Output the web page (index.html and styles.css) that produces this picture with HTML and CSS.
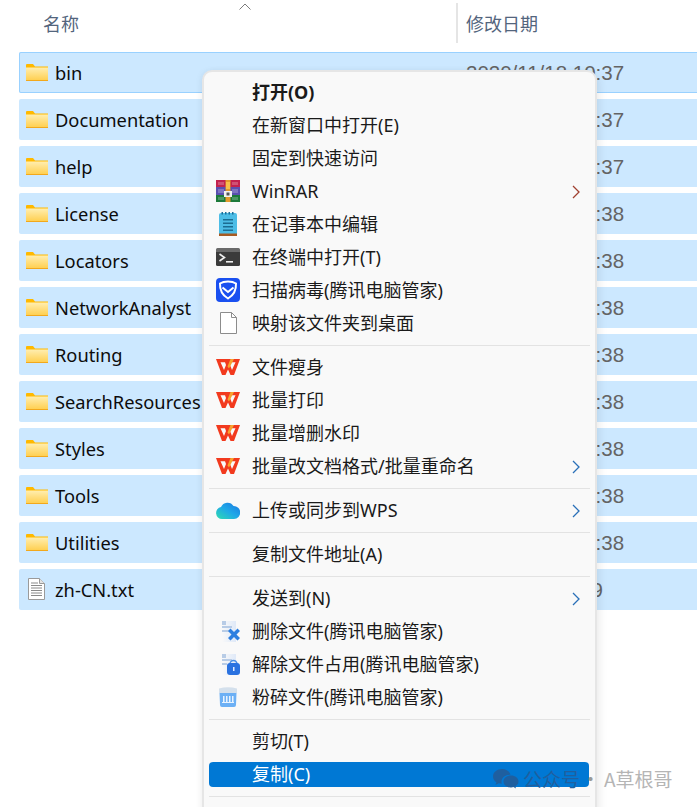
FILE: index.html
```html
<!DOCTYPE html>
<html lang="zh-CN">
<head>
<meta charset="utf-8">
<title>资源管理器</title>
<link rel="stylesheet" href="styles.css">
</head>
<body>
<svg class="defs" width="0" height="0" aria-hidden="true">
  <defs>
    <linearGradient id="fold" x1="0" y1="0" x2="0" y2="1"><stop offset="0" stop-color="#ffeeb0"/><stop offset="1" stop-color="#ffd052"/></linearGradient>
    <linearGradient id="cloud" x1="0" y1="1" x2="1" y2="0"><stop offset="0" stop-color="#2fdcb0"/><stop offset="0.5" stop-color="#1fa8e8"/><stop offset="1" stop-color="#1a76e0"/></linearGradient>
    <linearGradient id="doc" x1="0" y1="0" x2="1" y2="0"><stop offset="0" stop-color="#f9f9f9"/><stop offset="1" stop-color="#dfe9f8"/></linearGradient>
    <symbol id="folder" viewBox="0 0 22 17">
      <path d="M0 1a1 1 0 0 1 1-1h6l2 2.500h13v14.500H0z" fill="#ffb900"/>
      <path d="M0 3.500h22V16H0z" fill="url(#fold)"/>
      <path d="M0 16h22v1H0z" fill="#f2a81c"/>
    </symbol>
    <symbol id="wpsmark" viewBox="0 0 24 16">
      <path d="M0 0h24l-6 16h-3.500L12 10.500 9.500 16H6zM4.500 3.300L8 11l2-5-1-2.700zM15 3.300L14 6l2 5 3.500-7.700z" fill="#f23a1e" fill-rule="evenodd"/>
      <path d="M11.500 7.500L14.500 0H18l-5 9.500z" fill="#f8a22e"/>
    </symbol>
    <symbol id="chev" viewBox="0 0 8 14">
      <path d="M1 1l6 6-6 6" fill="none" stroke="currentColor" stroke-width="1.300"/>
    </symbol>
  </defs>
</svg>
<main class="page">
  <header class="head">
    <div class="col-name">名称<svg class="sort" width="12" height="7" viewBox="0 0 12 7"><path d="M.5 6.500L6 1l5.500 5.500" fill="none" stroke="#7b7b7b"/></svg></div>
    <div class="col-date">修改日期</div>
  </header>
  <ul class="files">
    <li class="row first"><svg class="ficon"><use href="#folder"/></svg><span class="fname">bin</span><span class="fdate">2020/11/18 10:37</span></li>
    <li class="row"><svg class="ficon"><use href="#folder"/></svg><span class="fname">Documentation</span><span class="fdate">2020/11/18 10:37</span></li>
    <li class="row"><svg class="ficon"><use href="#folder"/></svg><span class="fname">help</span><span class="fdate">2020/11/18 10:37</span></li>
    <li class="row"><svg class="ficon"><use href="#folder"/></svg><span class="fname">License</span><span class="fdate">2020/11/18 10:38</span></li>
    <li class="row"><svg class="ficon"><use href="#folder"/></svg><span class="fname">Locators</span><span class="fdate">2020/11/18 10:38</span></li>
    <li class="row"><svg class="ficon"><use href="#folder"/></svg><span class="fname">NetworkAnalyst</span><span class="fdate">2020/11/18 10:38</span></li>
    <li class="row"><svg class="ficon"><use href="#folder"/></svg><span class="fname">Routing</span><span class="fdate">2020/11/18 10:38</span></li>
    <li class="row"><svg class="ficon"><use href="#folder"/></svg><span class="fname">SearchResources</span><span class="fdate">2020/11/18 10:38</span></li>
    <li class="row"><svg class="ficon"><use href="#folder"/></svg><span class="fname">Styles</span><span class="fdate">2020/11/18 10:38</span></li>
    <li class="row"><svg class="ficon"><use href="#folder"/></svg><span class="fname">Tools</span><span class="fdate">2020/11/18 10:38</span></li>
    <li class="row"><svg class="ficon"><use href="#folder"/></svg><span class="fname">Utilities</span><span class="fdate">2020/11/18 10:38</span></li>
    <li class="row"><svg class="ficon txt" viewBox="0 0 17 22" width="17" height="22"><path d="M.5.500h11l5 5v16H.500z" fill="#fff" stroke="#9a9a9a"/><path d="M11.500.500v5h5" fill="#e4e4e4" stroke="#9a9a9a"/><path d="M3 5h7M3 7.500h11M3 10h11M3 12.500h11M3 15h11M3 17.500h11" stroke="#8a8a8a"/></svg><span class="fname">zh-CN.txt</span><span class="fdate">2020/9/8 10:39</span></li>
  </ul>

  <nav class="menu">
    <div class="item strong"><span class="micon"></span><span class="label">打开(O)</span></div>
    <div class="item"><span class="micon"></span><span class="label">在新窗口中打开(E)</span></div>
    <div class="item"><span class="micon"></span><span class="label">固定到快速访问</span></div>
    <div class="item"><span class="micon"><svg width="24" height="22" viewBox="0 0 24 22"><path d="M0 0h24v7H0z" fill="#c2224f"/><path d="M0 7h24v8H0z" fill="#5a4fb0"/><path d="M0 15h24v7H0z" fill="#1d7a3a"/><path d="M2 2h6v3H2zM2 9h6v4H2zM2 17h6v3H2zM16 2h6v3h-6zM16 9h6v4h-6zM16 17h6v3h-6z" fill="#fff" opacity=".22"/><path d="M9.500 0h5v22h-5z" fill="#e39a2c"/><path d="M8 11h8v6H8z" fill="#f2f2f2"/><path d="M10.500 12.500h3v3h-3z" fill="#555"/><path d="M10 2h4v7h-4z" fill="#f6c04a"/></svg></span><span class="label">WinRAR</span><svg class="chev red"><use href="#chev"/></svg></div>
    <div class="item"><span class="micon"><svg width="18" height="24" viewBox="0 0 18 24"><path d="M0 3a2 2 0 0 1 2-2h14a2 2 0 0 1 2 2v19H0z" fill="#4dbde6"/><path d="M0 21.500h18V24H0z" fill="#a65a22"/><path d="M2.500 0h1.500v2.500H2.500zM6 0h1.500v2.500H6zM9.500 0H11v2.500H9.500zM13 0h1.500v2.500H13z" fill="#1b6f9a"/><path d="M4 7h10v1.500H4zM4 10.500h10V12H4zM4 14h10v1.500H4zM4 17.500h10V19H4z" fill="#1c6d92"/></svg></span><span class="label">在记事本中编辑</span></div>
    <div class="item"><span class="micon"><svg width="24" height="18" viewBox="0 0 24 18"><path d="M1.500 0h21A1.500 1.500 0 0 1 24 1.500V4H0V1.500A1.500 1.500 0 0 1 1.500 0z" fill="#6a6a6a"/><path d="M0 4h24v12.500a1.500 1.500 0 0 1-1.500 1.500h-21A1.500 1.500 0 0 1 0 16.500z" fill="#3b3b3b"/><path d="M3.500 6l5 3.500-5 3.500" fill="none" stroke="#f0f0f0" stroke-width="1.600"/><path d="M10 13h7v1.600h-7z" fill="#f0f0f0"/></svg></span><span class="label">在终端中打开(T)</span></div>
    <div class="item"><span class="micon"><svg width="24" height="24" viewBox="0 0 24 24"><rect width="24" height="24" rx="4" fill="#1a50f0"/><path d="M12 3.500c3.500 0 6.500 1 8 2 .3 6.500-2 11.500-8 15-6-3.500-8.300-8.500-8-15 1.500-1 4.500-2 8-2z" fill="none" stroke="#fff" stroke-width="2"/><path d="M6.500 9.500l5.500 4.500 5.500-4.500" fill="none" stroke="#fff" stroke-width="2"/></svg></span><span class="label">扫描病毒(腾讯电脑管家)</span></div>
    <div class="item"><span class="micon"><svg width="17" height="22" viewBox="0 0 17 22"><path d="M.500.500h11l5 5v16H.500z" fill="#fff" stroke="#8c8c8c"/><path d="M11.500.500v5h5" fill="none" stroke="#8c8c8c"/></svg></span><span class="label">映射该文件夹到桌面</span></div>
    <div class="sep"></div>
    <div class="item"><span class="micon"><svg width="24" height="16"><use href="#wpsmark"/></svg></span><span class="label">文件瘦身</span></div>
    <div class="item"><span class="micon"><svg width="24" height="16"><use href="#wpsmark"/></svg></span><span class="label">批量打印</span></div>
    <div class="item"><span class="micon"><svg width="24" height="16"><use href="#wpsmark"/></svg></span><span class="label">批量增删水印</span></div>
    <div class="item"><span class="micon"><svg width="24" height="16"><use href="#wpsmark"/></svg></span><span class="label">批量改文档格式/批量重命名</span><svg class="chev"><use href="#chev"/></svg></div>
    <div class="sep"></div>
    <div class="item"><span class="micon"><svg width="24" height="18" viewBox="0 0 24 18"><path d="M6 18a6 6 0 0 1-1-11.900A7 7 0 0 1 17.500 5 6.500 6.500 0 0 1 18 18z" fill="url(#cloud)"/></svg></span><span class="label">上传或同步到WPS</span><svg class="chev"><use href="#chev"/></svg></div>
    <div class="sep"></div>
    <div class="item"><span class="micon"></span><span class="label">复制文件地址(A)</span></div>
    <div class="sep"></div>
    <div class="item"><span class="micon"></span><span class="label">发送到(N)</span><svg class="chev"><use href="#chev"/></svg></div>
    <div class="item"><span class="micon shift"><svg width="18" height="21" viewBox="0 0 18 21"><path d="M0 0h14v21H0z" fill="url(#doc)"/><path d="M0 0h4v4H0z" fill="#b8cce6"/><path d="M0 5h10v2H0zM0 9h7v2H0z" fill="#b8cce6"/><path d="M6 10l2.500-2.500L12 11l3.500-3.500L18 10l-3.500 3.500L18 17l-2.500 2.500L12 16l-3.500 3.500L6 17l3.500-3.500z" fill="#2d7fe0"/></svg></span><span class="label">删除文件(腾讯电脑管家)</span></div>
    <div class="item"><span class="micon shift"><svg width="18" height="21" viewBox="0 0 18 21"><path d="M0 0h14v21H0z" fill="url(#doc)"/><path d="M0 0h4v4H0z" fill="#b8cce6"/><path d="M0 5h10v2H0zM0 9h5v2H0z" fill="#b8cce6"/><path d="M8 10a3.500 3.500 0 0 1 7 0" fill="none" stroke="#4a8fe6" stroke-width="1.500"/><rect x="5" y="9" width="13" height="12" rx="3" fill="#2a72e0"/><path d="M11 13h1.500v4H11z" fill="#dfeaff"/></svg></span><span class="label">解除文件占用(腾讯电脑管家)</span></div>
    <div class="item"><span class="micon"><svg width="18" height="20" viewBox="0 0 18 20"><path d="M0 1.500Q9-1 18 1.500V6H0z" fill="#d4e0ec"/><path d="M.500 6h17l-.5 12a2 2 0 0 1-2 2H3a2 2 0 0 1-2-2z" fill="#6cb0f5"/><path d="M4 9h1.500v6H4zM7 9h1.500v6H7zM10 9h1.500v6H10zM13 9h1.500v6H13zM3 15h12v1H3z" fill="#e8f3ff"/></svg></span><span class="label">粉碎文件(腾讯电脑管家)</span></div>
    <div class="sep"></div>
    <div class="item"><span class="micon"></span><span class="label">剪切(T)</span></div>
    <div class="item active"><span class="micon"></span><span class="label">复制(C)</span></div>
    <div class="sep"></div>
  </nav>

  <div class="mark">
    <svg width="26" height="22" viewBox="0 0 26 22"><path d="M9 1C4 1 0 4.300 0 8.500c0 2.400 1.300 4.400 3.400 5.800L2.500 17l3.200-1.700c1 .3 2 .4 3.100.4-.2-.7-.3-1.300-.3-2 0-3.900 3.700-7 8.300-7h.7C16.600 3.300 13.100 1 9 1z" fill="#1f5f9f"/><path d="M25.500 13.500c0-3.400-3.300-6-7.500-6s-7.500 2.600-7.500 6 3.300 6 7.500 6c.9 0 1.700-.1 2.500-.4l2.500 1.400-.7-2.200c2-1.100 3.200-2.900 3.200-4.800z" fill="#1f5f9f"/></svg>
    <span class="mark-a">公众号</span><span class="mark-dot">·</span><span class="mark-b">A草根哥</span>
  </div>
</main>
</body>
</html>
```

FILE: styles.css
```css
* { box-sizing: border-box; }
html, body { margin: 0; padding: 0; background: #fff; }
.defs { position: absolute; }
.page {
  position: relative;
  width: 697px;
  height: 807px;
  overflow: hidden;
  font-family: "Noto Sans", "Noto Sans CJK SC", sans-serif;
  font-size: 18px;
  color: #111;
}
.head { display: flex; height: 52px; padding-top: 3px; }
.col-name {
  position: relative;
  width: 456px;
  padding: 7px 0 0 43px;
  color: #53657d;
  line-height: 26px;
  font-family: "Noto Sans CJK SC", sans-serif;
}
.sort { position: absolute; left: 239px; top: 0; }
.col-date {
  height: 40px;
  flex: 1;
  padding: 7px 0 0 8px;
  border-left: 2px solid #e5e5e5;
  color: #53657d;
  line-height: 26px;
  font-family: "Noto Sans CJK SC", sans-serif;
}
.files { list-style: none; margin: 0; padding: 0 0 0 19px; display: flex; flex-direction: column; gap: 6px; }
.row {
  display: flex;
  align-items: center;
  height: 41px;
  width: 700px;
  padding-left: 7px;
  background: #cce8ff;
  border-radius: 2px 0 0 2px;
}
.row.first { box-shadow: inset 0 0 0 1px #99d1ff; }
.ficon { width: 22px; height: 17px; margin-right: 7px; margin-top: -1px; flex: none; }
.ficon.txt { width: 17px; height: 22px; margin-top: -1px; margin-left: 2px; margin-right: 10px; }
.fname { width: 411px; flex: none; font-size: 18.300px; line-height: 24px; color: #0c0c0c; }
.fdate {
  font-family: "Liberation Sans", sans-serif;
  font-size: 20.500px;
  line-height: 24px;
  margin-top: 1px;
  color: #646464;
  white-space: nowrap;
}

.menu {
  position: absolute;
  left: 202px;
  top: 70px;
  width: 395px;
  height: 760px;
  padding: 3.500px 5px 0;
  background: #f9f9f9;
  border: 2px solid #e6e6e6;
  border-radius: 10px;
  box-shadow: 3px 3px 8px rgba(0,0,0,.07), -2px 0 6px rgba(0,0,0,.04);
}
.item {
  position: relative;
  display: flex;
  align-items: center;
  height: 33px;
  padding-left: 7px;
  color: #1a1a1a;
}
.micon { width: 24px; height: 24px; flex: none; margin-right: 12px; display: flex; align-items: center; justify-content: center; }
.micon.shift { transform: translateX(3px); }
.label { line-height: 24px; white-space: nowrap; }
.strong .label { font-weight: 700; }
.chev { position: absolute; left: 363px; top: 10px; width: 8px; height: 14px; color: #2a70b8; }
.chev.red { color: #a04030; }
.sep { height: 1px; margin: 5px 0; background: #e3e3e3; }
.active { color: #fff; }
.active::before {
  content: "";
  position: absolute;
  left: 0; right: 1px; top: 4px; bottom: 4px;
  background: #0078d4;
  border-radius: 4px;
}
.active .micon, .active .label { position: relative; }

.mark {
  position: absolute;
  left: 493px;
  top: 767px;
  display: flex;
  align-items: center;
  gap: 4px;
  font-family: "Noto Sans CJK SC", sans-serif;
  font-size: 19px;
  line-height: 24px;
}
.mark-a { color: #1f5f9f; }
.mark-dot { color: #999; margin-left: -3px; }
.mark-b { color: #b5b5b5; }
```
